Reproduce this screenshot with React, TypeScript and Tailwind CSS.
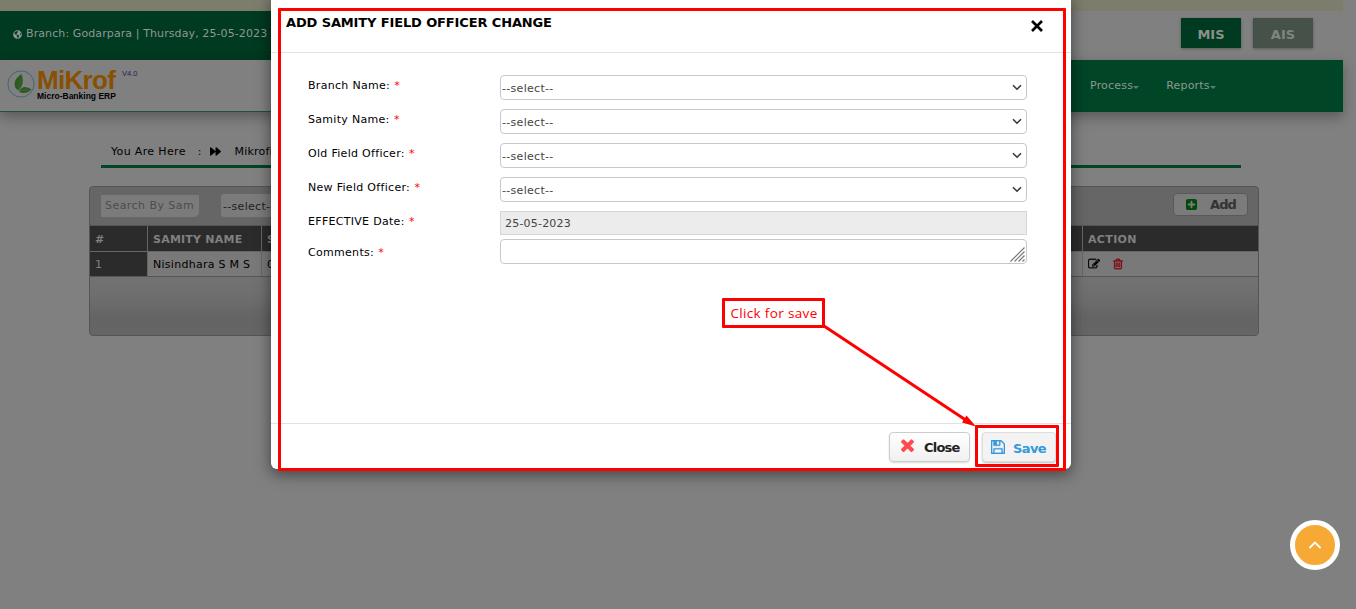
import React from "react";
import { FaForward, FaGlobeAmericas } from "react-icons/fa";

type IconProps = { className?: string };

const TimesIcon = ({ className }: IconProps) => (
  <svg viewBox="302 334 1188 1220" className={className} fill="currentColor" preserveAspectRatio="none">
    <path d="M1490 1322q0 40-28 68l-136 136q-28 28-68 28t-68-28l-294-294-294 294q-28 28-68 28t-68-28l-136-136q-28-28-28-68t28-68l294-294-294-294q-28-28-28-68t28-68l136-136q28-28 68-28t68 28l294 294 294-294q28-28 68-28t68 28l136 136q28 28 28 68t-28 68l-294 294 294 294q28 28 28 68z" />
  </svg>
);

const SaveIcon = ({ className }: IconProps) => (
  <svg viewBox="128 128 1536 1536" className={className} fill="currentColor" stroke="currentColor" strokeWidth="30">
    <path d="M512 1536h768v-384h-768v384zm896 0h128v-896q0-14-10-38.5t-20-34.5l-281-281q-10-10-34-20t-39-10v416q0 40-28 68t-68 28h-576q-40 0-68-28t-28-68v-416h-128v1280h128v-416q0-40 28-68t68-28h832q40 0 68 28t28 68v416zm-384-928v-320q0-13-9.5-22.5t-22.5-9.5h-192q-13 0-22.5 9.5t-9.5 22.5v320q0 13 9.5 22.5t22.5 9.5h192q13 0 22.5-9.5t9.5-22.5zm640 32v928q0 40-28 68t-68 28h-1344q-40 0-68-28t-28-68v-1344q0-40 28-68t68-28h928q40 0 88 20t76 48l280 280q28 28 48 76t20 88z" />
  </svg>
);

const TrashIcon = ({ className }: IconProps) => (
  <svg viewBox="0 0 1792 1792" className={className} fill="currentColor" stroke="currentColor" strokeWidth="40">
    <path d="M704 736v576q0 14-9 23t-23 9h-64q-14 0-23-9t-9-23v-576q0-14 9-23t23-9h64q14 0 23 9t9 23zm256 0v576q0 14-9 23t-23 9h-64q-14 0-23-9t-9-23v-576q0-14 9-23t23-9h64q14 0 23 9t9 23zm256 0v576q0 14-9 23t-23 9h-64q-14 0-23-9t-9-23v-576q0-14 9-23t23-9h64q14 0 23 9t9 23zm128 724v-948h-896v948q0 22 7 40.5t14.5 27 10.5 8.5h832q3 0 10.5-8.5t14.5-27 7-40.5zm-672-1076h448l-48-117q-7-9-17-11h-317q-10 2-17 11zm928 32v64q0 14-9 23t-23 9h-96v948q0 83-47 143.5t-113 60.5h-832q-66 0-113-58.5t-47-141.5v-952h-96q-14 0-23-9t-9-23v-64q0-14 9-23t23-9h309l70-167q15-37 54-63t79-26h320q40 0 79 26t54 63l70 167h309q14 0 23 9t9 23z" />
  </svg>
);

const EditIcon = ({ className }: IconProps) => (
  <svg viewBox="0 0 1792 1792" className={className} fill="currentColor" stroke="currentColor" strokeWidth="40">
    <path d="M888 1184l116-116-152-152-116 116v56h96v96h56zm440-720q-16-16-33 1l-350 350q-17 17-1 33t33-1l350-350q17-17 1-33zm80 594v190q0 119-84.5 203.5t-203.5 84.5h-832q-119 0-203.5-84.5t-84.5-203.5v-832q0-119 84.5-203.5t203.5-84.5h832q63 0 117 25 15 7 18 23 3 17-9 29l-49 49q-14 14-32 8-23-6-45-6h-832q-66 0-113 47t-47 113v832q0 66 47 113t113 47h832q66 0 113-47t47-113v-126q0-13 9-22l64-64q15-15 35-7t20 29zm-96-738l288 288-672 672h-288v-288zm444 132l-92 92-288-288 92-92q28-28 68-28t68 28l152 152q28 28 28 68t-28 68z" />
  </svg>
);

const PlusSquareIcon = ({ className }: IconProps) => (
  <svg viewBox="128 128 1536 1536" className={className} fill="currentColor">
    <path d="M1408 960v-128q0-26-19-45t-45-19h-320v-320q0-26-19-45t-45-19h-128q-26 0-45 19t-19 45v320h-320q-26 0-45 19t-19 45v128q0 26 19 45t45 19h320v320q0 26 19 45t45 19h128q26 0 45-19t19-45v-320h320q26 0 45-19t19-45zm256-544v960q0 119-84.5 203.5t-203.5 84.5h-960q-119 0-203.5-84.5t-84.5-203.5v-960q0-119 84.5-203.5t203.5-84.5h960q119 0 203.5 84.5t84.5 203.5z" />
  </svg>
);

const LeafLogo = () => (
  <svg viewBox="0 0 28 28" className="h-7 w-7 shrink-0">
    <circle cx="14" cy="14" r="13.1" fill="none" stroke="#3e6273" strokeWidth="0.9" />
    <path d="M11.500 20.500C6 17.500 5.500 9.500 14.500 4C16.500 10 16.500 15 11.500 20.500Z" fill="#2b5b22" />
    <path d="M12 21.500C14 16 19.500 15.500 24.500 19.500C20.500 23.500 15.500 24 12 21.500Z" fill="#2b5b22" />
    <path d="M11.500 20.500C11.500 16 12.500 12 14 9M13 21C16 20 18 20 20.500 20" fill="none" stroke="#47703a" strokeWidth="0.5" />
  </svg>
);

const Caret = () => <span className="mt-[2px] border-x-[3px] border-t-[3px] border-x-transparent border-t-[#5c7a83]" />;

const Chevron = () => (
  <svg viewBox="0 0 10 7" className="h-[7px] w-[10px]" fill="none" stroke="#383838" strokeWidth="1.6">
    <path d="M1 1.200L5 5.200L9 1.200" />
  </svg>
);

const Field = ({ label, className, children }: { label: string; className: string; children: React.ReactNode }) => (
  <div className={`flex ${className}`}>
    <div className="w-48 shrink-0 pt-[4px] text-[11px] leading-[14px] tracking-[0.3px] text-black">
      {label} <span className="ml-[0.5px] text-[#f00]">*</span>
    </div>
    {children}
  </div>
);

const SelectBox = () => (
  <div className="flex h-[25px] w-[527px] items-center justify-between rounded-[4px] border border-[#c8c8c8] bg-white pr-[4px] pl-[1px] text-[11px] text-[#444]">
    <span className="pt-[2px] leading-[14px] tracking-[0.3px]">--select--</span>
    <Chevron />
  </div>
);

const selectFields = ["Branch Name:", "Samity Name:", "Old Field Officer:", "New Field Officer:"];

function Page() {
  return (
    <div className="flex h-full flex-col">
      <div className="h-[11px] w-[1343px] shrink-0 bg-[#7d7d6d]" />
      <div className="flex h-[49px] w-[1343px] shrink-0 justify-between">
        <div className="flex w-[670px] items-center bg-[#003a20] pb-[2px] pl-[13px] text-[11px] text-[#8f9892]">
          <FaGlobeAmericas className="mr-[4px] h-[9px] w-[9px]" />
          <span className="tracking-[0.1px] whitespace-nowrap">Branch: Godarpara | Thursday, 25-05-2023</span>
        </div>
        <div className="flex gap-3 pt-[7px] pr-[30px] text-[13px] font-bold">
          <div className="flex h-[30px] w-[60px] items-center justify-center bg-[#003a20] pt-[3px] text-[#8b918d] shadow-[0_1px_3px_rgba(0,0,0,0.3)]">MIS</div>
          <div className="flex h-[30px] w-[60px] items-center justify-center bg-[#465149] pt-[3px] text-[#7f8581] shadow-[0_1px_3px_rgba(0,0,0,0.3)]">AIS</div>
        </div>
      </div>
      <div className="flex h-[52px] w-[1343px] shrink-0 bg-[#004526] shadow-[0_5px_12px_rgba(0,0,0,0.3)]">
        <div className="flex w-[670px] border-b border-[#1c5039] bg-[#808080] pt-[10px] pl-[7px]">
          <LeafLogo />
          <div className="ml-[2px] flex w-[84px] flex-col font-['Liberation_Sans',sans-serif] font-bold">
            <div className="text-[26px] leading-[21px] tracking-[-0.7px] text-[#885000]">MiKrof</div>
            <div className="text-[8.500px] leading-[11px] whitespace-nowrap text-black">Micro-Banking ERP</div>
          </div>
          <span className="ml-px font-['Liberation_Sans',sans-serif] text-[7.500px] leading-[8px] text-[#22225d]">V4.0</span>
        </div>
        <div className="flex flex-1 items-center gap-[27px] pl-[420px] text-[11px] text-[#8c9992]">
          <div className="flex items-center tracking-[0.2px]">Process<Caret /></div>
          <div className="flex items-center tracking-[0.2px]">Reports<Caret /></div>
        </div>
      </div>
      <div className="mt-[24px] ml-[101px] flex h-8 w-[1140px] shrink-0 items-center border-b-[3px] border-[#004526] pl-[10px] text-[11px] text-black">
        <span className="pt-[3px] tracking-[0.35px]">You Are Here</span>
        <span className="ml-[12px] pt-[3px]">:</span>
        <FaForward className="mt-px ml-[8px] h-[11px] w-[11px]" />
        <span className="ml-[14px] pt-[3px] tracking-[0.2px]">Mikrofinance</span>
      </div>
      <div className="mt-[18px] ml-[89px] flex h-[150px] w-[1170px] shrink-0 flex-col overflow-hidden rounded-[4px] border border-[#555] bg-[#666] text-[11px]">
        <div className="flex h-[39px] shrink-0 justify-between border-b border-[#555] pr-[10px] pl-[11px]">
          <div className="flex items-start gap-5 pt-[7px]">
            <div className="mt-px flex h-[22px] w-[98px] items-center overflow-hidden rounded-br-[5px] bg-[#7b7b7b] pl-[4px] tracking-[0.45px] whitespace-nowrap text-[#4d4d4d]">Search By Sam</div>
            <div className="ml-[2px] flex h-[23px] w-[150px] items-center rounded-[3px] bg-[#7b7b7b] pt-[3px] pl-[2px] tracking-[0.3px] text-[#222]">--select--</div>
          </div>
          <div className="mt-[6px] flex h-[23px] w-[75px] items-center rounded-[4px] border border-[#595959] bg-[#7b7b7b] pl-[12px] text-[13px] font-bold text-[#333]">
            <PlusSquareIcon className="mr-[13px] h-[11px] w-[11px] text-[#004b08]" />
            <span className="-mr-2 tracking-[-0.9px]">Add</span>
          </div>
        </div>
        <div className="flex h-[26px] shrink-0 border-b border-[#666] bg-[#2b2b2b] font-bold text-[#808080]">
          <div className="flex w-[58px] items-center border-r border-[#666] pt-[3px] pl-[5px]">#</div>
          <div className="flex w-[114px] items-center border-r border-[#666] pt-[3px] pl-[5px] tracking-[0.22px] whitespace-nowrap">SAMITY NAME</div>
          <div className="flex w-[821px] items-center border-r border-[#666] pt-[3px] pl-[5px]">SAMITY CODE</div>
          <div className="flex items-center pt-[3px] pl-[5px] tracking-[0.35px]">ACTION</div>
        </div>
        <div className="flex h-[25px] shrink-0 border-b border-[#555] bg-[#797979] text-black">
          <div className="flex w-[58px] items-center border-r border-[#666] bg-[#2b2b2b] pt-[2px] pl-[5px] text-[#808080]">1</div>
          <div className="flex w-[114px] items-center border-r border-[#666] pt-[2px] pl-[5px] tracking-[0.27px] whitespace-nowrap">Nisindhara S M S</div>
          <div className="flex w-[821px] items-center border-r border-[#666] pt-[2px] pl-[5px]">0001</div>
          <div className="flex items-center gap-3 pl-[5px]">
            <EditIcon className="h-3 w-3" />
            <TrashIcon className="h-3 w-3 text-[#87000f]" />
          </div>
        </div>
        <div className="flex-1 bg-[linear-gradient(#727272_0%,#6f6f6f_30%,#646464_70%,#656565_100%)]" />
      </div>
    </div>
  );
}

function SamityDialog() {
  return (
    <div className="absolute top-[-6px] left-[271px] flex h-[475px] w-[800px] flex-col rounded-[6px] bg-white pt-[6px] shadow-[0_5px_15px_rgba(0,0,0,0.5)]">
      <div className="flex h-[53px] shrink-0 items-start justify-between border-b border-[#e2e2e2] pt-[14px] pr-[28px] pl-[15px] text-black">
        <h1 className="text-[13px] leading-[18px] font-bold tracking-[-0.13px]">ADD SAMITY FIELD OFFICER CHANGE</h1>
        <svg viewBox="0 0 12 12" className="mt-[6px] h-[12px] w-[12px]" fill="none" stroke="currentColor" strokeWidth="2.700">
          <path d="M1 1L11 11M11 1L1 11" />
        </svg>
      </div>
      <div className="flex flex-1 flex-col pt-[22px] pl-[37px]">
        {selectFields.map((label) => (
          <Field key={label} label={label} className="h-[34px]">
            <SelectBox />
          </Field>
        ))}
        <Field label="EFFECTIVE Date:" className="h-[28px]">
          <div className="flex h-[24px] w-[527px] items-center border border-[#d6d6d6] bg-[#ececec] pt-[2px] pl-1 text-[11px] tracking-[0.2px] text-[#444]">25-05-2023</div>
        </Field>
        <Field label="Comments:" className="pt-[3px]">
          <div className="-mt-[3px] flex h-[25px] w-[527px] items-end justify-end rounded-[4px] border border-[#c8c8c8] pr-px pb-px">
            <svg viewBox="0 0 15 15" className="h-[15px] w-[15px]" fill="none" stroke="#777" strokeWidth="1.200">
              <path d="M0.500 14.500L14.500 0.500M4.500 14.500L14.500 4.500M8.500 14.500L14.500 8.500M12.500 14.500L14.500 12.500" />
            </svg>
          </div>
        </Field>
      </div>
      <div className="flex h-[46px] shrink-0 gap-[12px] border-t border-[#e2e2e2] pt-[8px] pl-[618px] text-[13px] font-bold">
        <button className="flex h-[30px] w-[81px] items-center rounded-[4px] border border-[#ccc] bg-linear-to-b from-white to-[#f0f0f0] pl-[11px] text-[#222] shadow-[0_1px_2px_rgba(0,0,0,0.15)]">
          <TimesIcon className="mr-[10px] mb-[3px] h-[13px] w-[13px] shrink-0 text-[#ff4b4f]" />
          <span className="pt-[2px] tracking-[-0.8px]">Close</span>
        </button>
        <button className="flex h-[30px] w-[74px] items-center rounded-[4px] border border-[#ddd] bg-[#f3f3f3] pl-[8px] text-[#3498db] shadow-[0_1px_2px_rgba(0,0,0,0.25)]">
          <SaveIcon className="mr-[8px] h-[14px] w-[14px] shrink-0" />
          <span className="pt-[3px] tracking-[-0.6px]">Save</span>
        </button>
      </div>
    </div>
  );
}

export default function App() {
  return (
    <div className="relative h-[609px] w-[1356px] overflow-hidden bg-[#808080] font-['DejaVu_Sans',sans-serif]">
      <Page />
      <SamityDialog />
      <div className="absolute top-[8px] left-[278px] h-[463px] w-[788px] rounded-[1px] border-[3px] border-[#f00]" />
      <div className="absolute top-[298px] left-[722px] flex h-[30px] w-[103px] items-center justify-center rounded-[1px] border-[3px] border-[#f00] pl-px font-['Open_Sans',sans-serif] text-[13.500px] tracking-[0.35px] whitespace-nowrap text-[#f00]">Click for save</div>
      <div className="absolute top-[425px] left-[975px] h-[42px] w-[84px] rounded-[1px] border-[3px] border-[#f00]" />
      <svg className="absolute top-[320px] left-[820px] h-[110px] w-[160px]" viewBox="820 320 160 110">
        <path d="M824 326L968 421.500" stroke="#f00" strokeWidth="3" />
        <path d="M976 426.500L966.500 415.500L962 422.500Z" fill="#f00" />
      </svg>
      <div className="absolute top-[520px] left-[1290px] flex h-[50px] w-[50px] items-center justify-center rounded-full border-[5px] border-white bg-[#f6a935]">
        <svg viewBox="0 0 12 8" className="h-[8px] w-[12px]" fill="none" stroke="#fff" strokeWidth="1.800" strokeLinecap="round">
          <path d="M1 6.500L6 1.500L11 6.500" />
        </svg>
      </div>
    </div>
  );
}
